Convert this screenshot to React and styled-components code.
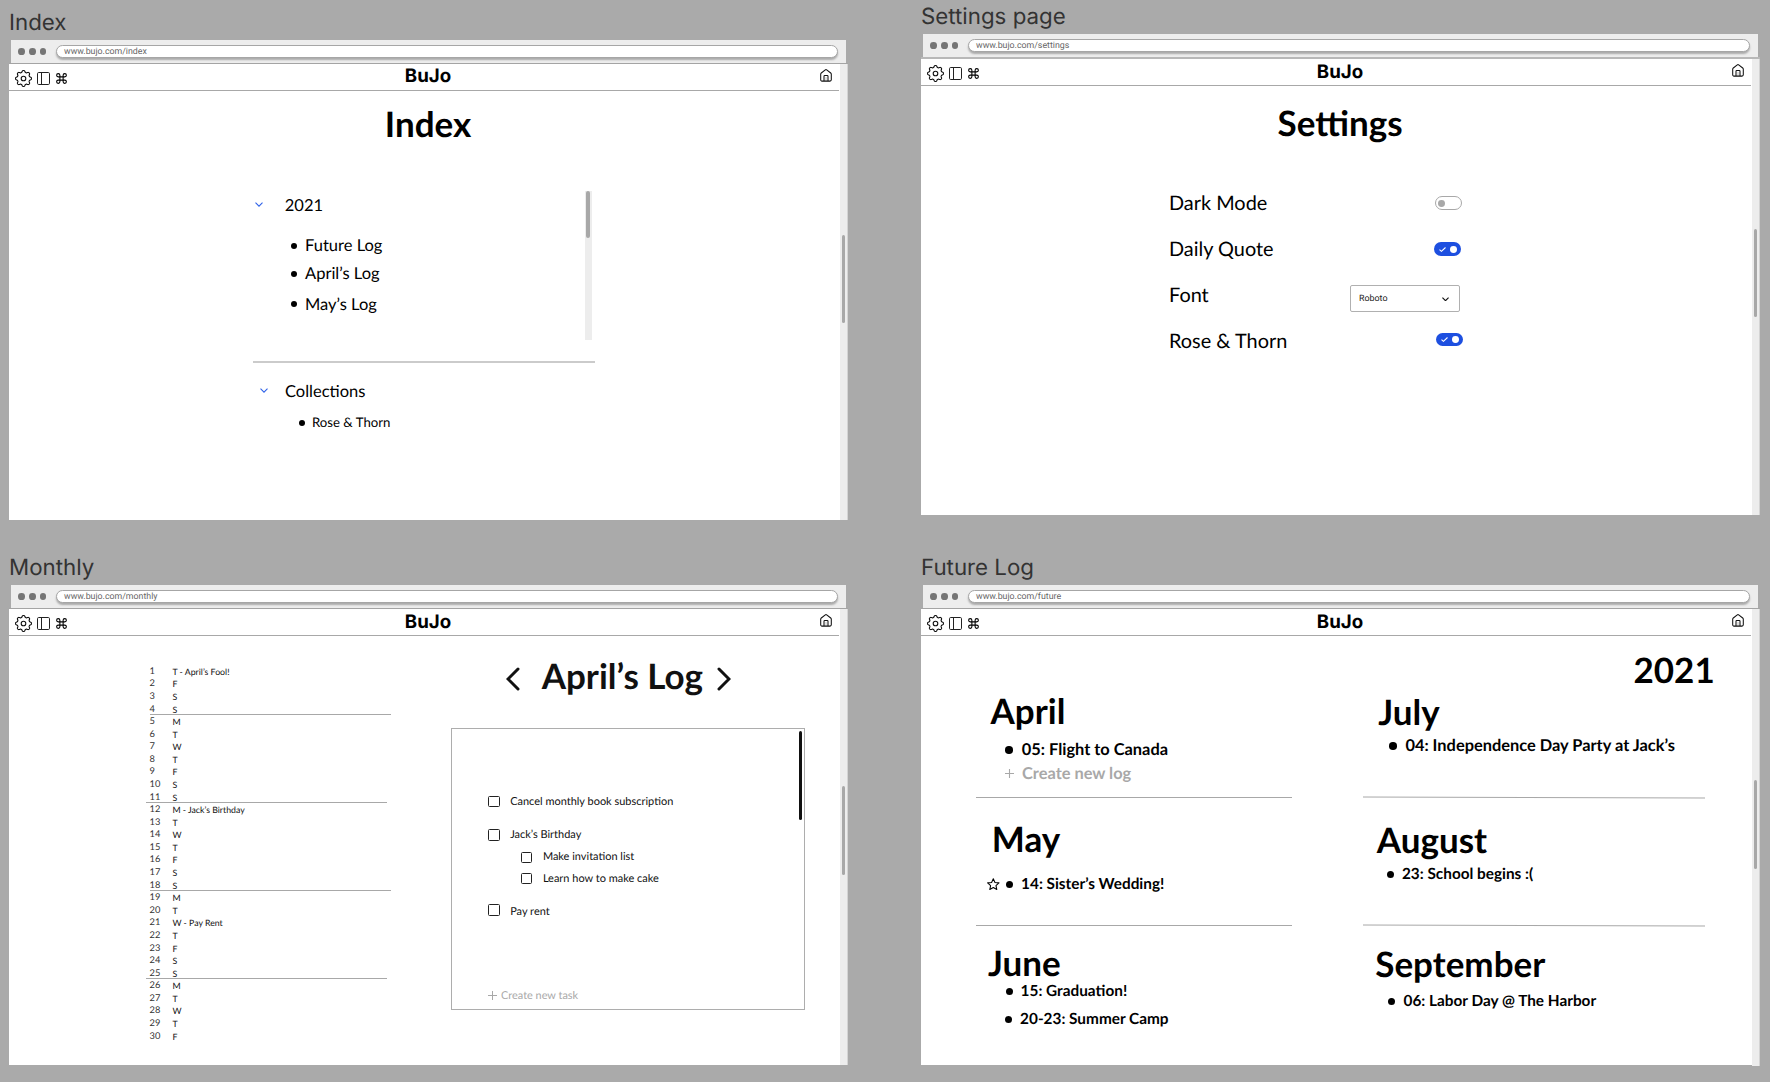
import React from "react";
import styled, { createGlobalStyle } from "styled-components";
import { FiCommand } from "react-icons/fi";

const GlobalStyle = createGlobalStyle`
  *, *::before, *::after { box-sizing: border-box; }
  body {
    margin: 0;
    background: #aaaaaa;
    font-family: Lato, sans-serif;
    color: #000;
    text-rendering: geometricPrecision;
    -webkit-font-smoothing: antialiased;
  }
  h1, h2, h3, p, ul { margin: 0; padding: 0; font-weight: inherit; font-size: inherit; }
  ul { list-style: none; }
`;

/* ---------- canvas ---------- */

const Canvas = styled.main`
  display: grid;
  grid-template-columns: 839px 839px;
  column-gap: 73px;
  width: 1770px;
  height: 1082px;
  padding-left: 9px;
  overflow: hidden;
  background: #aaaaaa;
`;

const Column = styled.div`
  display: flex;
  flex-direction: column;
  gap: ${(p) => p.$gap}px;
  padding-top: ${(p) => p.$top}px;
`;

const Board = styled.section`
  display: flex;
  flex-direction: column;
`;

const BoardName = styled.h2`
  height: 32px;
  font: 400 22.3px/30px Inter, sans-serif;
  color: #333;
`;

/* ---------- browser frame ---------- */

const Chrome = styled.div`
  display: flex;
  align-items: center;
  height: 23px;
  margin: 0 2px;
  padding: 0 8px 0 7px;
  background: #ededed;
`;

const Dots = styled.div`
  display: flex;
  gap: 4.2px;
  margin-right: 9.3px;
`;

const Dot = styled.span`
  width: 6.7px;
  height: 6.7px;
  border-radius: 50%;
  background: #757575;
`;

const Address = styled.div`
  flex: 1;
  height: 13px;
  padding-left: 7.3px;
  border: 1px solid #a6a6a6;
  border-radius: 7px;
  background: #fff;
  box-shadow: 0 2px 2px rgba(0, 0, 0, 0.28);
  font: 400 8.8px/12.6px Roboto, sans-serif;
  color: #666;
`;

const Window = styled.div`
  display: grid;
  grid-template-columns: 1fr 8px;
  height: ${(p) => p.$height}px;
  border-top: ${(p) => p.$rule || 1}px solid ${(p) => (p.$rule ? "#b8b8b8" : "#a4a4a4")};
  background: #fff;
`;

const Track = styled.div`
  padding-top: ${(p) => p.$at}px;
  padding-left: 2px;
  background: #ededed;
  border-right: 1px solid #d4d4d4;
`;

const Thumb = styled.div`
  width: ${(p) => p.$w || 3.4}px;
  height: ${(p) => p.$h || 88}px;
  margin: ${(p) => p.$m || "0"};
  border-radius: 2px;
  background: ${(p) => p.$color || "#a8a8a8"};
`;

const Header = styled.header`
  display: flex;
  width: 830px;
  height: 27px;
  padding: 0 6.7px 0 6px;
  border-bottom: 1px solid #a8a8a8;
`;

const Tools = styled.div`
  display: flex;
  align-items: center;
  width: 389.8px;
  padding-top: 3px;
`;

const Tool = styled.span`
  display: flex;
  margin-left: ${(p) => p.$gap || 0}px;
`;

const Brand = styled.h1`
  flex: 1;
  font: 700 18.7px/${(p) => p.$line || 25}px Inter, sans-serif;
`;

const HomeSlot = styled.span`
  display: flex;
  padding-top: 5px;
`;

const gearOutline = (() => {
  const steps = 128;
  const points = Array.from({ length: steps }, (_, i) => {
    const a = (i / steps) * Math.PI * 2;
    const r = 7.1 + 0.95 * Math.tanh(1.5 * Math.cos(8 * a));
    return `${(8.5 + r * Math.cos(a)).toFixed(2)} ${(8.5 + r * Math.sin(a)).toFixed(2)}`;
  });
  return `M${points.join("L")}Z`;
})();

const GearIcon = () => (
  <svg width="17" height="17" viewBox="0 0 17 17" fill="none" stroke="#111" strokeWidth="1.1" strokeLinejoin="round">
    <path d={gearOutline} />
    <circle cx="8.5" cy="8.5" r="2.3" />
  </svg>
);

const SidebarIcon = () => (
  <svg width="13" height="13" viewBox="0 0 13 13" fill="none" stroke="#222" strokeWidth="1">
    <rect x=".5" y=".5" width="12" height="12" rx="1.2" />
    <path d="M4.500.5v12" />
  </svg>
);

const HomeIcon = () => (
  <svg width="12" height="13" viewBox="0 0 12 13" fill="none" stroke="#111" strokeWidth="1.05" strokeLinejoin="round">
    <path d="M.7 5.2c0-.5.2-.9.6-1.2L5.3.9c.4-.3 1-.3 1.4 0l4 3.1c.4.3.6.7.6 1.2v5.6c0 .8-.5 1.3-1.3 1.3H2c-.8 0-1.300-.5-1.300-1.300z" />
    <path d="M4 12V7.300c0-.5.3-.8.8-.8h2.400c.5 0 .8.3.8.8V12" />
    <path d="M6 8v4" strokeOpacity=".25" />
  </svg>
);

function Frame({ name, url, height, rule, brandLine, thumb, thumbHeight, children }) {
  return (
    <Board>
      <BoardName>{name}</BoardName>
      <Chrome>
        <Dots>
          <Dot />
          <Dot />
          <Dot />
        </Dots>
        <Address>{url}</Address>
      </Chrome>
      <Window $height={height} $rule={rule}>
        <div>
          <Header>
            <Tools>
              <Tool><GearIcon /></Tool>
              <Tool $gap={5}><SidebarIcon /></Tool>
              <Tool $gap={5}><FiCommand size={13} /></Tool>
            </Tools>
            <Brand $line={brandLine}>BuJo</Brand>
            <HomeSlot><HomeIcon /></HomeSlot>
          </Header>
          {children}
        </div>
        <Track $at={thumb}><Thumb $h={thumbHeight} /></Track>
      </Window>
    </Board>
  );
}

/* ---------- shared parts ---------- */

const Title = styled.h2`
  padding: ${(p) => p.$pad || "0"};
  font-size: 35px;
  font-weight: 700;
  line-height: 42px;
  white-space: nowrap;
`;

const Bullet = styled.span`
  flex: none;
  width: ${(p) => p.$d}px;
  height: ${(p) => p.$d}px;
  margin: ${(p) => p.$m || "0"};
  border-radius: 50%;
  background: #000;
`;

const Chevron = ({ w, h, color, width }) => (
  <svg width={w} height={h} viewBox="0 0 8 5" fill="none" stroke={color} strokeWidth={width} preserveAspectRatio="none">
    <path d="M.5.6 4 4.100 7.500.6" />
  </svg>
);

/* ---------- index ---------- */

const IndexBody = styled.div`
  display: flex;
  flex-direction: column;
  width: 342px;
  margin: 46px 0 0 244px;
`;

const YearPanel = styled.div`
  display: flex;
  justify-content: space-between;
  height: 149px;
  padding-right: 3px;
`;

const YearTrack = styled.div`
  width: 7px;
  padding-left: 1.300px;
  background: #ededed;
`;

const GroupRow = styled.div`
  display: flex;
  align-items: center;
  height: 27px;
  padding-left: ${(p) => p.$indent}px;
  font-size: 16.500px;
`;

const GroupName = styled.h3`
  margin: 1px 0 0 ${(p) => p.$gap}px;
`;

const LogList = styled.ul`
  padding: ${(p) => p.$pad};
`;

const LogItem = styled.li`
  display: flex;
  align-items: center;
  height: ${(p) => p.$h || 28}px;
  margin-top: ${(p) => p.$mt || 0}px;
  font-size: ${(p) => p.$size || 16.500}px;
`;

const SectionRule = styled.hr`
  width: 342px;
  height: 2px;
  margin: 21px 0 14px;
  border: 0;
  background: #cbcbcb;
`;

const IndexPage = () => (
  <>
    <Title $pad="12px 0 0 375.8px">Index</Title>
    <IndexBody>
      <YearPanel>
        <div>
          <GroupRow $indent={2}>
            <Chevron w={8} h={5} color="#2f62e8" width={1.1} />
            <GroupName $gap={21.800}>2021</GroupName>
          </GroupRow>
          <LogList $pad="13px 0 0 38px">
            <LogItem><Bullet $d={6} $m="2px 8px 0 0" />Future Log</LogItem>
            <LogItem><Bullet $d={6} $m="1px 8px 0 0" />April’s Log</LogItem>
            <LogItem $mt={2.500}><Bullet $d={6} $m="0 8px 0 0" />May’s Log</LogItem>
          </LogList>
        </div>
        <YearTrack><Thumb $h={47} $w={3.7} /></YearTrack>
      </YearPanel>
      <SectionRule />
      <GroupRow $indent={7}>
        <Chevron w={8} h={5} color="#2f62e8" width={1.1} />
        <GroupName $gap={17}>Collections</GroupName>
      </GroupRow>
      <LogList $pad="6px 0 0 46px">
        <LogItem $h={24} $size={13.2}><Bullet $d={6} $m="2px 7px 0 0" />Rose &amp; Thorn</LogItem>
      </LogList>
    </IndexBody>
  </>
);

/* ---------- settings ---------- */

const SettingsForm = styled.div`
  width: 294px;
  margin: 35.600px 0 0 248px;
`;

const Setting = styled.div`
  display: flex;
  align-items: center;
  justify-content: space-between;
  height: 46px;
  font-size: 19.900px;
`;

const SettingName = styled.span`
  padding-top: 1px;
`;

const Switch = styled.span`
  display: flex;
  align-items: center;
  justify-content: space-between;
  width: 27px;
  height: 13.300px;
  margin: ${(p) => p.$m || "0"};
  padding: 0 ${(p) => (p.$on ? 4 : 2)}px 0 ${(p) => (p.$on ? 5 : 2)}px;
  border: ${(p) => (p.$on ? "0" : "1px solid #a8a8a8")};
  border-radius: 7px;
  background: ${(p) => (p.$on ? "#1d4fe0" : "#fff")};
`;

const Knob = styled.span`
  width: 6.900px;
  height: 6.900px;
  border-radius: 50%;
  background: ${(p) => (p.$on ? "#fff" : "#a8a8a8")};
`;

const Tick = () => (
  <svg width="7" height="5" viewBox="0 0 7 5" fill="none" stroke="#fff" strokeWidth="1.1">
    <path d="M.5 2.600 2.400 4.300 6.500.5" />
  </svg>
);

const FontSelect = styled.span`
  display: flex;
  align-items: center;
  justify-content: space-between;
  width: 109.700px;
  height: 26.500px;
  margin: 9px 3.300px 0 0;
  padding: 1px 9.500px 0 8px;
  border: 1px solid #b0b0b0;
  border-radius: 2px;
  font: 400 8.900px/14px Roboto, sans-serif;
  color: #222;
`;

const SettingsPage = () => (
  <>
    <Title $pad="15.5px 0 0 356.6px">Settings</Title>
    <SettingsForm>
      <Setting>
        <SettingName>Dark Mode</SettingName>
        <Switch $m="2px 1.3px 0 0"><Knob /></Switch>
      </Setting>
      <Setting>
        <SettingName>Daily Quote</SettingName>
        <Switch $on $m="2px 2.3px 0 0"><Tick /><Knob $on /></Switch>
      </Setting>
      <Setting>
        <SettingName>Font</SettingName>
        <FontSelect>Roboto<Chevron w={7} h={4.500} color="#111" width={1.300} /></FontSelect>
      </Setting>
      <Setting>
        <SettingName>Rose &amp; Thorn</SettingName>
        <Switch $on $m="0 0 1.6px"><Tick /><Knob $on /></Switch>
      </Setting>
    </SettingsForm>
  </>
);

/* ---------- monthly ---------- */

const MonthlyLayout = styled.div`
  display: flex;
  color: #111;
`;

const DayList = styled.ul`
  width: 241px;
  margin: 28.800px 60.800px 0 140.500px;
`;

const Day = styled.li`
  display: grid;
  grid-template-columns: 22.900px 1fr;
  height: 12.590px;
  width: 241px;
  margin-left: ${(p) => (p.$rule === "out" ? -4 : 0)}px;
  padding-left: ${(p) => (p.$rule === "out" ? 4 : 0)}px;
  border-bottom: ${(p) => (p.$rule ? "1px solid #a8a8a8" : "0")};
  line-height: 12.500px;
  white-space: nowrap;
`;

const DayNumber = styled.span`
  font-size: 9.300px;
  color: #333;
`;

const DayText = styled.span`
  padding-top: 1px;
  font-size: 8.750px;
`;

const weekdays = ["T", "F", "S", "S", "M", "T", "W"];
const notes = { 1: "April’s Fool!", 12: "Jack’s Birthday", 21: "Pay Rent" };
const rules = { 4: "in", 11: "out", 18: "in", 25: "out" };
const days = Array.from({ length: 30 }, (_, i) => ({
  n: i + 1,
  text: weekdays[i % 7] + (notes[i + 1] ? ` - ${notes[i + 1]}` : ""),
}));

const LogPane = styled.div`
  width: 353.500px;
  padding-top: 19.300px;
`;

const LogHeading = styled.div`
  display: flex;
  align-items: center;
  gap: 14.400px;
  padding-left: 55px;
`;

const Arrow = styled.svg`
  flex: none;
  width: 14px;
  height: 24px;
  margin: 6px ${(p) => p.$mr || 0}px 0 0;
  fill: none;
  stroke: #111;
  stroke-width: 3;
  stroke-linecap: round;
`;

const TaskBox = styled.div`
  display: flex;
  height: 282px;
  margin-top: 30.700px;
  border: 1px solid #adadad;
`;

const TaskList = styled.div`
  display: flex;
  flex: 1;
  flex-direction: column;
  padding: 62.800px 0 3.200px 36px;
`;

const Task = styled.div`
  display: flex;
  align-items: center;
  gap: 10.400px;
  height: 20px;
  margin: ${(p) => p.$mt || 0}px 0 0 ${(p) => (p.$sub ? 32.700 : 0)}px;
  font-size: 10.970px;
`;

const Checkbox = styled.span`
  width: 11.500px;
  height: 11.500px;
  margin-top: ${(p) => p.$shift || 0}px;
  border: 1px solid #222;
  border-radius: 1.500px;
`;

const NewTask = styled.div`
  display: flex;
  align-items: center;
  gap: 3.800px;
  height: 20px;
  margin-top: auto;
  font-size: 10.900px;
  color: #a8a8a8;
`;

const Plus = ({ size, width }) => (
  <svg width={size} height={size} viewBox="0 0 9 9" stroke="#a8a8a8" strokeWidth={width}>
    <path d="M4.500 0v9M0 4.500h9" />
  </svg>
);

const MonthlyPage = () => (
  <MonthlyLayout>
    <DayList>
      {days.map((d) => (
        <Day key={d.n} $rule={rules[d.n]}>
          <DayNumber>{d.n}</DayNumber>
          <DayText>{d.text}</DayText>
        </Day>
      ))}
    </DayList>
    <LogPane>
      <LogHeading>
        <Arrow viewBox="0 0 14 24" $mr={7}><path d="M12 2 2 12l10 10" /></Arrow>
        <Title>April’s Log</Title>
        <Arrow viewBox="0 0 14 24"><path d="m2 2 10 10L2 22" /></Arrow>
      </LogHeading>
      <TaskBox>
        <TaskList>
          <Task><Checkbox $shift={-1} />Cancel monthly book subscription</Task>
          <Task $mt={12.700}><Checkbox $shift={1} />Jack’s Birthday</Task>
          <Task $mt={2} $sub><Checkbox $shift={2} />Make invitation list</Task>
          <Task $mt={2} $sub><Checkbox />Learn how to make cake</Task>
          <Task $mt={12.600}><Checkbox $shift={-2} />Pay rent</Task>
          <NewTask><Plus size={9} width={1} />Create new task</NewTask>
        </TaskList>
        <Thumb $w={3.400} $h={89} $m="2px 1.5px 0 0" $color="#111" />
      </TaskBox>
    </LogPane>
  </MonthlyLayout>
);

/* ---------- future log ---------- */

const YearHeading = styled(Title)`
  margin-bottom: -1px;
  padding: 13px 37.300px 0 0;
  text-align: right;
`;

const MonthGrid = styled.div`
  display: grid;
  grid-template-columns: 315.700px 341.700px;
  column-gap: 71.600px;
  padding-left: 55px;
`;

const MonthColumn = styled.div`
  display: grid;
  grid-template-rows: 107px 1px 127px 1px 140px;
`;

const MonthRule = styled.hr`
  width: 100%;
  height: 1px;
  margin: 0;
  border: 0;
  background: #a8a8a8;
  transform: rotate(${(p) => p.$tilt || 0}deg);
`;

const Entry = styled.div`
  display: flex;
  align-items: center;
  height: 22px;
  margin-top: ${(p) => p.$mt}px;
  padding-left: ${(p) => p.$indent}px;
  font-size: ${(p) => p.$size || 15.350}px;
  font-weight: 700;
  white-space: nowrap;
  color: ${(p) => (p.$muted ? "#a8a8a8" : "#000")};
`;

const EntryText = styled.span`
  margin-left: ${(p) => p.$gap}px;
`;

const Star = () => (
  <svg width="12.600" height="12.600" viewBox="0 0 24 24" fill="none" stroke="#000" strokeWidth="2" strokeLinejoin="round">
    <path d="m12 1.500 3.200 7 7.600.8-5.700 5.100 1.600 7.600L12 18.100 5.300 22l1.600-7.600L1.200 9.300l7.600-.8z" />
  </svg>
);

const FuturePage = () => (
  <>
    <YearHeading>2021</YearHeading>
    <MonthGrid>
      <MonthColumn>
        <div>
          <Title $pad="0 0 0 14.6px">April</Title>
          <Entry $mt={6.300} $indent={29} $size={16.400}><Bullet $d={7.500} $m="1px 0 0" /><EntryText $gap={9.300}>05: Flight to Canada</EntryText></Entry>
          <Entry $mt={1.800} $indent={29} $size={16.400} $muted><Plus size={9} width={1.100} /><EntryText $gap={8}>Create new log</EntryText></Entry>
        </div>
        <MonthRule />
        <div>
          <Title $pad="20px 0 0 15.8px">May</Title>
          <Entry $mt={13} $indent={11}><Star /><Bullet $d={7} $m="1px 0 0 6.500px" /><EntryText $gap={8}>14: Sister’s Wedding!</EntryText></Entry>
        </div>
        <MonthRule />
        <div>
          <Title $pad="16px 0 0 12px">June</Title>
          <Entry $mt={-4} $indent={29.500}><Bullet $d={7} $m="1px 0 0" /><EntryText $gap={8.100}>15: Graduation!</EntryText></Entry>
          <Entry $mt={5.700} $indent={29}><Bullet $d={7} $m="1px 0 0" /><EntryText $gap={8.100}>20-23: Summer Camp</EntryText></Entry>
        </div>
      </MonthColumn>
      <MonthColumn>
        <div>
          <Title $pad="1px 0 0 15px">July</Title>
          <Entry $mt={1.500} $indent={26} $size={16.400}><Bullet $d={7.500} $m="1px 0 0" /><EntryText $gap={8.600}>04: Independence Day Party at Jack’s</EntryText></Entry>
        </div>
        <MonthRule $tilt={0.15} />
        <div>
          <Title $pad="21px 0 0 13.5px">August</Title>
          <Entry $mt={2} $indent={23.700}><Bullet $d={7} $m="1px 0 0" /><EntryText $gap={8}>23: School begins :(</EntryText></Entry>
        </div>
        <MonthRule $tilt={0.15} />
        <div>
          <Title $pad="17px 0 0 12px">September</Title>
          <Entry $mt={4.800} $indent={25.200}><Bullet $d={7} $m="1px 0 0" /><EntryText $gap={8.100}>06: Labor Day @ The Harbor</EntryText></Entry>
        </div>
      </MonthColumn>
    </MonthGrid>
  </>
);

export default function App() {
  return (
    <>
      <GlobalStyle />
      <Canvas>
        <Column $top={8} $gap={33}>
          <Frame name="Index" url="www.bujo.com/index" height={457} brandLine={23} thumb={171}>
            <IndexPage />
          </Frame>
          <Frame name="Monthly" url="www.bujo.com/monthly" height={457} thumb={177} thumbHeight={89}>
            <MonthlyPage />
          </Frame>
        </Column>
        <Column $top={2} $gap={38}>
          <Frame name="Settings page" url="www.bujo.com/settings" height={458} rule={2} brandLine={26} thumb={170}>
            <SettingsPage />
          </Frame>
          <Frame name="Future Log" url="www.bujo.com/future" height={457} thumb={171} thumbHeight={89}>
            <FuturePage />
          </Frame>
        </Column>
      </Canvas>
    </>
  );
}
